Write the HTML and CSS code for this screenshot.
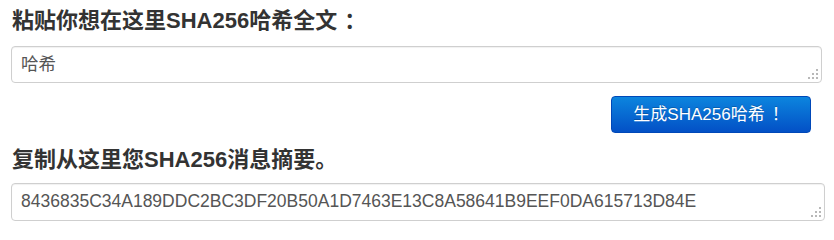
FILE: index.html
```html
<!DOCTYPE html>
<html lang="zh">
<head>
<meta charset="utf-8">
<title>SHA256</title>
<link rel="stylesheet" href="styles.css">
</head>
<body>
<div class="wrap">
  <h2 class="title first">粘贴你想在这里SHA256哈希全文<span class="punct">：</span></h2>
  <div class="field field-in">
    <textarea class="box">哈希</textarea>
    <svg class="grip" width="12" height="11" viewBox="0 0 12 11"><g fill="#b8b8b8"><rect x="9" y="0" width="2" height="2"/><rect x="9" y="4" width="2" height="2"/><rect x="5" y="4" width="2" height="2"/><rect x="9" y="8" width="2" height="2"/><rect x="5" y="8" width="2" height="2"/><rect x="1" y="8" width="2" height="2"/></g></svg>
  </div>
  <div class="actions">
    <button class="btn">生成SHA256哈希<span class="punct">！</span></button>
  </div>
  <h2 class="title second">复制从这里您SHA256消息摘要。</h2>
  <div class="field field-out">
    <textarea class="box">8436835C34A189DDC2BC3DF20B50A1D7463E13C8A58641B9EEF0DA615713D84E</textarea>
    <svg class="grip" width="12" height="11" viewBox="0 0 12 11"><g fill="#b8b8b8"><rect x="9" y="0" width="2" height="2"/><rect x="9" y="4" width="2" height="2"/><rect x="5" y="4" width="2" height="2"/><rect x="9" y="8" width="2" height="2"/><rect x="5" y="8" width="2" height="2"/><rect x="1" y="8" width="2" height="2"/></g></svg>
  </div>
</div>
</body>
</html>
```
FILE: styles.css
```css
html, body {
  margin: 0;
  padding: 0;
  background: #fff;
}
.wrap {
  padding: 0 0 0 11px;
  font-family: "Liberation Sans", "Noto Sans CJK SC", sans-serif;
}
.title {
  margin: 0;
  font-size: 22px;
  line-height: 30px;
  font-weight: bold;
  color: #333;
  padding-left: 1px;
}
.title.first {
  margin-top: 6px;
  margin-bottom: 10px;
}
.title.second {
  margin-top: 12px;
  margin-bottom: 8px;
}
.punct {
  padding-left: 7px;
}
.field {
  position: relative;
}
.field-in {
  width: 811px;
  height: 37px;
}
.field-out {
  width: 814px;
  height: 38px;
}
.box {
  display: block;
  box-sizing: border-box;
  width: 100%;
  height: 100%;
  margin: 0;
  padding: 6px 9px;
  border: 1px solid #cfcfcf;
  border-radius: 4px;
  box-shadow: inset 0 1px 1px rgba(0,0,0,0.06);
  font-family: "Liberation Sans", "Noto Sans CJK SC", sans-serif;
  font-size: 17.5px;
  line-height: 23px;
  color: #555;
  resize: none;
  overflow: hidden;
  background: #fff;
}
.grip {
  position: absolute;
  right: 3px;
  bottom: 3px;
}
.actions {
  width: 811px;
  display: flex;
  justify-content: flex-end;
  margin-top: 13px;
}
.btn {
  width: 200px;
  height: 37px;
  margin-right: 11px;
  padding: 0;
  border: 1px solid #0048b8;
  border-radius: 4px;
  background: linear-gradient(to bottom, #0c85de, #0350c6);
  color: #fff;
  font-family: "Liberation Sans", "Noto Sans CJK SC", sans-serif;
  font-size: 17px;
  line-height: 35px;
  text-shadow: 0 -1px 0 rgba(0,0,0,0.2);
  cursor: pointer;
}
```
